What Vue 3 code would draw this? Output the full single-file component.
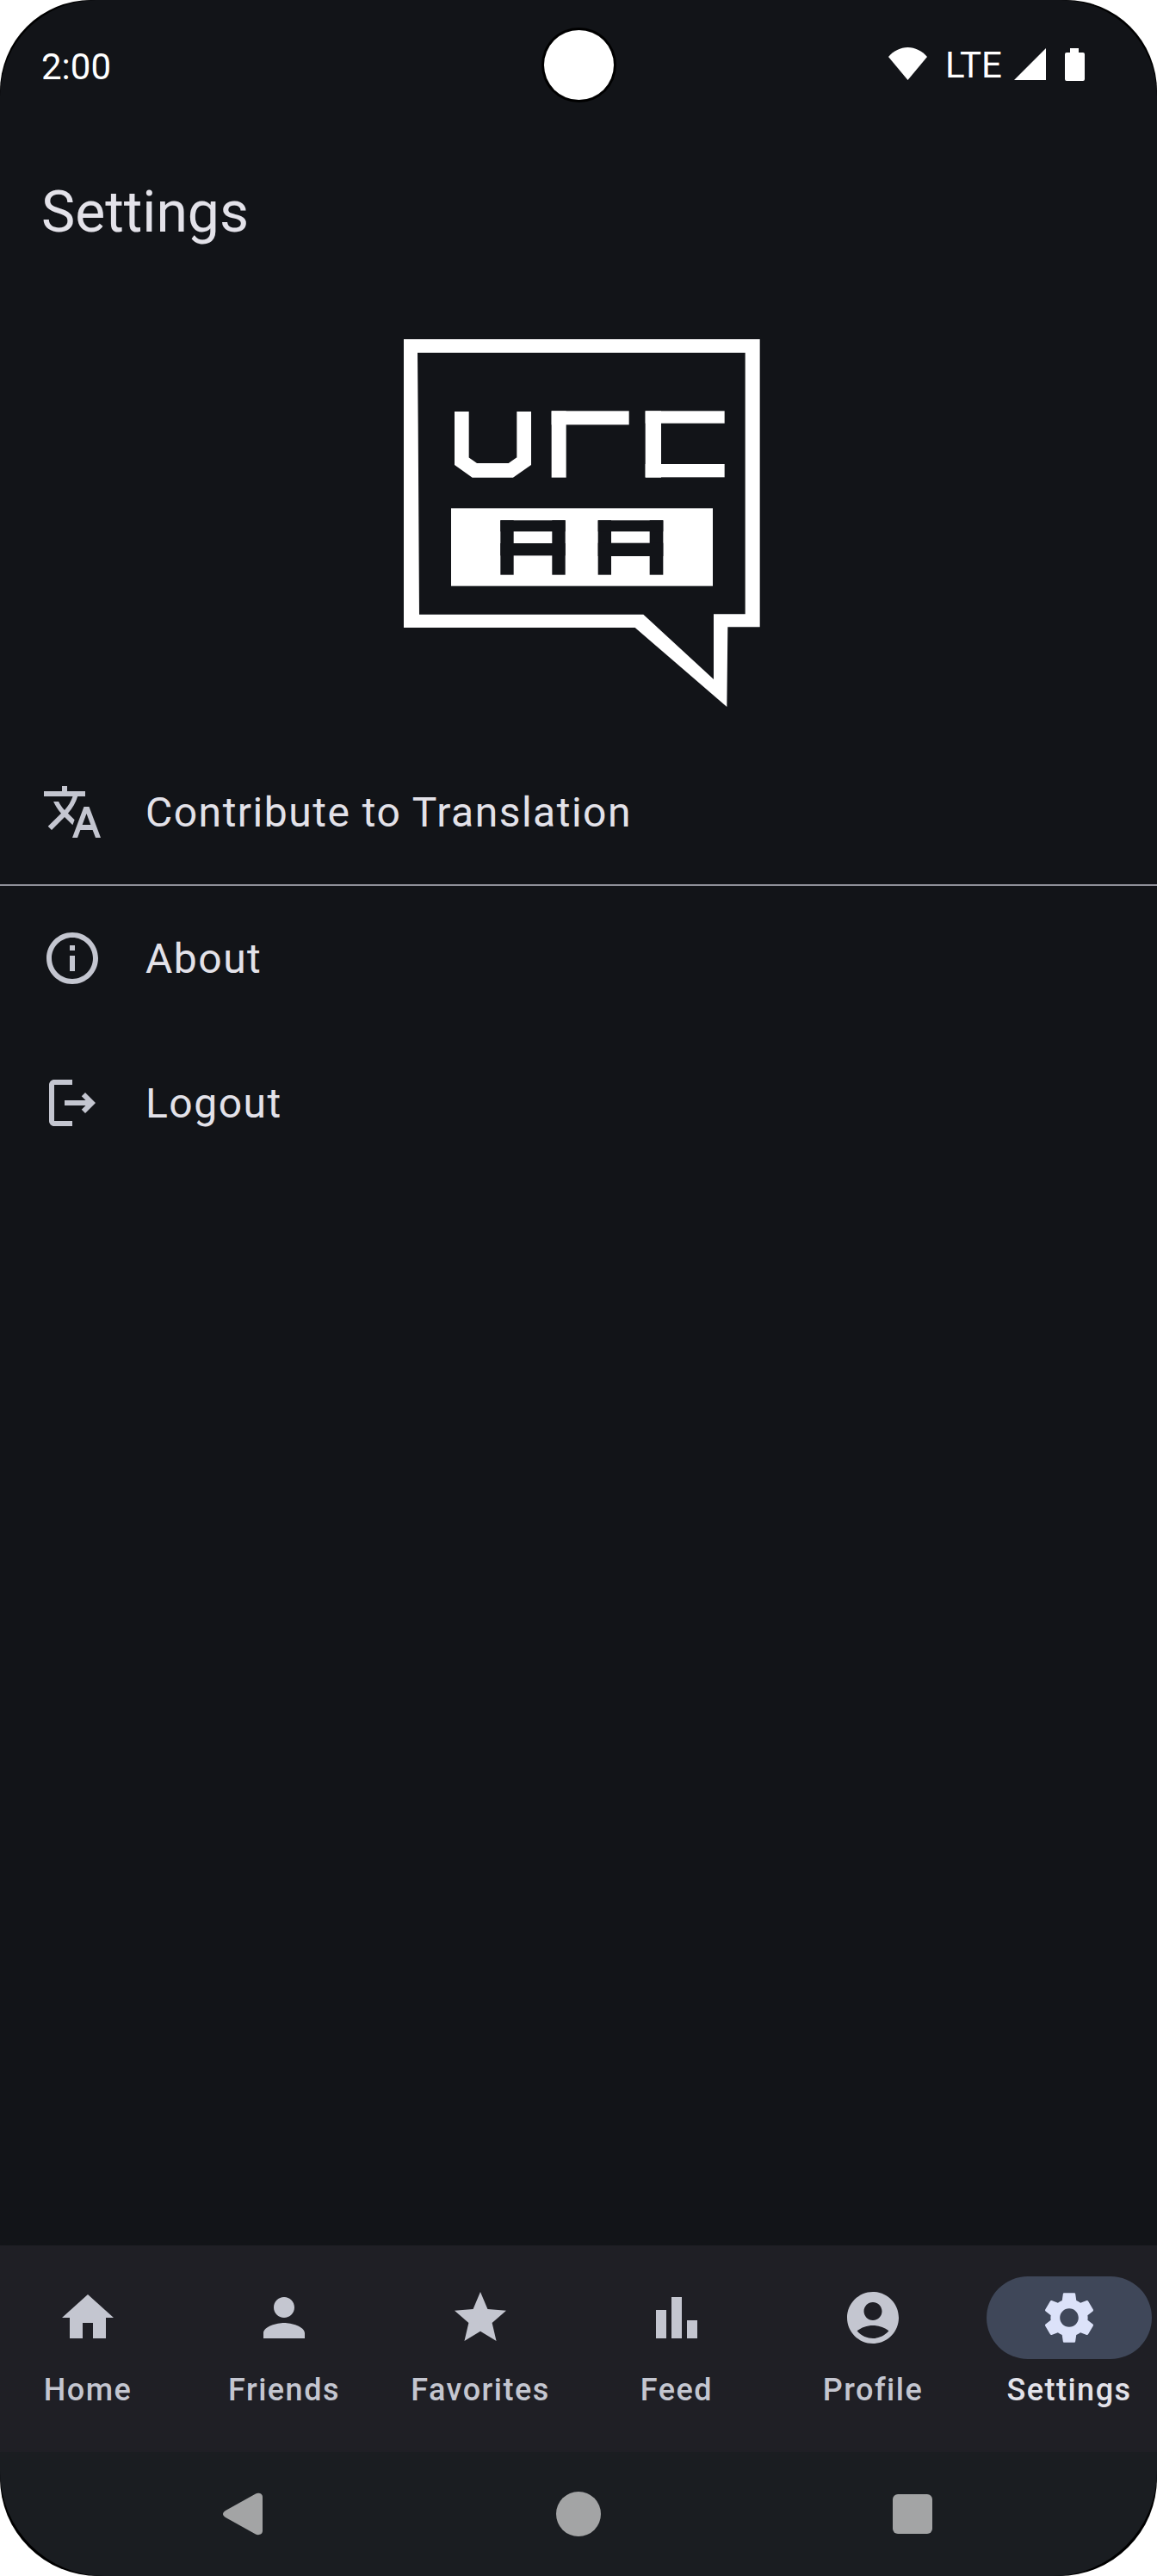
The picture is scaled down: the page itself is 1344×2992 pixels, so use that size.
<script setup>
// Settings screen: status bar, title, logo, option list, bottom navigation, system nav.
const options = [
  {
    label: 'Contribute to Translation',
    divider: true,
    d: 'M12.87 15.07l-2.54-2.51.03-.03c1.74-1.94 2.98-4.17 3.71-6.53H17V4h-7V2H8v2H1v1.99h11.17C11.5 7.92 10.44 9.75 9 11.35 8.07 10.32 7.3 9.19 6.69 8h-2c.73 1.63 1.73 3.17 2.98 4.56l-5.09 5.02L4 19l5-5 3.11 3.11.76-2.04zM18.5 10h-2L12 22h2l1.12-3h4.75L21 22h2l-4.5-12zm-2.62 7l1.62-4.33L19.12 17h-3.24z',
  },
  {
    label: 'About',
    d: 'M11 7h2v2h-2zm0 4h2v6h-2zm1-9C6.48 2 2 6.48 2 12s4.48 10 10 10 10-4.48 10-10S17.52 2 12 2zm0 18c-4.41 0-8-3.59-8-8s3.59-8 8-8 8 3.59 8 8-3.59 8-8 8z',
  },
  {
    label: 'Logout',
    d: 'M5 5h7V3H5c-1.1 0-2 .9-2 2v14c0 1.1.9 2 2 2h7v-2H5V5zM17 8l-1.41 1.41L17.17 11H9v2h8.17l-1.58 1.59L17 16l4-4z',
  },
]

const tabs = [
  { label: 'Home', d: 'M10 20v-6h4v6h5v-8h3L12 3 2 12h3v8z' },
  { label: 'Friends', d: 'M12 12c2.21 0 4-1.79 4-4s-1.79-4-4-4-4 1.79-4 4 1.79 4 4 4zm0 2c-2.67 0-8 1.34-8 4v2h16v-2c0-2.66-5.33-4-8-4z' },
  { label: 'Favorites', d: 'M12 17.27L18.18 21l-1.64-7.03L22 9.24l-7.19-.61L12 2 9.19 8.63 2 9.24l5.46 4.73L5.82 21z' },
  { label: 'Feed', d: 'M4 9h4v11H4zm6-5h4v16h-4zm6 9h4v7h-4z' },
  { label: 'Profile', d: 'M12 2C6.48 2 2 6.48 2 12s4.48 10 10 10 10-4.48 10-10S17.52 2 12 2zm0 4c1.93 0 3.5 1.57 3.5 3.5S13.93 13 12 13s-3.5-1.57-3.5-3.5S10.07 6 12 6zm0 14c-2.03 0-4.43-.82-6.14-2.88C7.55 15.8 9.68 15 12 15s4.45.8 6.14 2.12C16.43 19.18 14.03 20 12 20z' },
  {
    label: 'Settings',
    active: true,
    d: 'M19.14 12.94c.04-.3.06-.61.06-.94 0-.32-.02-.64-.07-.94l2.03-1.58c.18-.14.23-.41.12-.61l-1.92-3.32c-.12-.22-.37-.29-.59-.22l-2.39.96c-.5-.38-1.03-.7-1.62-.94l-.36-2.54c-.04-.24-.24-.41-.48-.41h-3.84c-.24 0-.43.17-.47.41l-.36 2.54c-.59.24-1.13.57-1.62.94l-2.39-.96c-.22-.08-.47 0-.59.22L2.74 8.87c-.12.21-.08.47.12.61l2.03 1.58c-.05.3-.09.63-.09.94s.02.64.07.94l-2.03 1.58c-.18.14-.23.41-.12.61l1.92 3.32c.12.22.37.29.59.22l2.39-.96c.5.38 1.03.7 1.62.94l.36 2.54c.05.24.24.41.48.41h3.84c.24 0 .44-.17.47-.41l.36-2.54c.59-.24 1.13-.56 1.62-.94l2.39.96c.22.08.47 0 .59-.22l1.92-3.32c.12-.22.07-.47-.12-.61l-2.01-1.58zM12 15.6c-1.98 0-3.6-1.62-3.6-3.6s1.62-3.6 3.6-3.6 3.6 1.62 3.6 3.6-1.62 3.6-3.6 3.6z',
  },
]
</script>

<template>
  <div class="device">
    <div class="screen">
      <div class="camera"></div>

      <div class="status">
        <span class="time">2:00</span>
        <div class="status-icons">
          <svg class="wifi" width="45" height="38" viewBox="0 0 45 38"><path d="M22.5 38L0 11C6 4 14 0 22.5 0S39 4 45 11z" /></svg>
          <span class="lte">LTE</span>
          <svg class="signal" width="37" height="37" viewBox="0 0 37 37"><path d="M37 0v37H0z" /></svg>
          <svg class="battery" width="23" height="38" viewBox="0 0 23 38"><path d="M6 0h10v5h5a2 2 0 0 1 2 2v29a2 2 0 0 1-2 2H2a2 2 0 0 1-2-2V7a2 2 0 0 1 2-2h4z" /></svg>
        </div>
      </div>

      <main class="content">
        <h1 class="title">Settings</h1>

        <div class="logo">
          <svg width="464" height="460" viewBox="0 0 1392 1380" role="img" aria-label="VRC AA logo">
            <path class="logo-light" fill-rule="evenodd" d="M87 42H1328V1045H1216L1213 1323 893 1047H87zM135 89L137 335 141 1001H922L1167 1227V1000H1277V89z" />
            <polyline class="logo-stroke" points="289,294 289,467 334,499 460,499 506,467 506,294" />
            <rect class="logo-light" x="602" y="292" width="51" height="232" />
            <rect class="logo-light" x="602" y="292" width="270" height="48" />
            <rect class="logo-light" x="929" y="292" width="55" height="232" />
            <rect class="logo-light" x="929" y="292" width="276" height="43" />
            <rect class="logo-light" x="929" y="477" width="276" height="46" />
            <rect class="logo-light" x="252" y="631" width="912" height="271" />
            <rect class="logo-dark" x="424" y="673" width="46" height="190" />
            <rect class="logo-dark" x="604" y="673" width="46" height="190" />
            <rect class="logo-dark" x="424" y="673" width="226" height="39" />
            <rect class="logo-dark" x="424" y="753" width="226" height="43" />
            <rect class="logo-dark" x="764" y="673" width="46" height="190" />
            <rect class="logo-dark" x="944" y="673" width="47" height="190" />
            <rect class="logo-dark" x="764" y="673" width="227" height="39" />
            <rect class="logo-dark" x="764" y="752" width="227" height="46" />
          </svg>
        </div>

        <ul class="options">
          <li v-for="item in options" :key="item.label" class="option" :class="{ divided: item.divider }">
            <svg class="option-icon" width="72" height="72" viewBox="0 0 24 24"><path :d="item.d" /></svg>
            <span class="option-label">{{ item.label }}</span>
          </li>
        </ul>
      </main>

      <nav class="tabs">
        <div v-for="tab in tabs" :key="tab.label" class="tab" :class="{ active: tab.active }">
          <div class="tab-pill">
            <svg width="72" height="72" viewBox="0 0 24 24"><path :d="tab.d" /></svg>
          </div>
          <span class="tab-label">{{ tab.label }}</span>
        </div>
      </nav>

      <div class="sysnav">
        <svg width="46" height="50" viewBox="0 0 46 50"><path d="M3 21L38 1.500c3-1.500 8-.5 8 4v39c0 4.500-5 5.500-8 4L3 29c-4-2.500-4-5.500 0-8z" /></svg>
        <svg width="52" height="52" viewBox="0 0 52 52"><circle cx="26" cy="26" r="26" /></svg>
        <svg width="46" height="46" viewBox="0 0 46 46"><rect width="46" height="46" rx="6" /></svg>
      </div>
    </div>
  </div>
</template>

<style>
body {
  background: #fff;
}
</style>

<style scoped>
.device {
  width: 1344px;
  height: 2992px;
  background: #000;
  border-radius: 106px 106px 114px 114px;
  overflow: hidden;
}
.screen {
  position: relative;
  width: 100%;
  height: 100%;
  display: flex;
  flex-direction: column;
  background: #121418;
  border-radius: 112px 112px 122px 122px;
  overflow: hidden;
  font-family: Roboto, "Noto Sans", sans-serif;
  color: #e3e2e9;
}

/* punch-hole camera sits over the status bar */
.camera {
  position: absolute;
  top: 35px;
  left: 631.5px;
  width: 81px;
  height: 81px;
  border-radius: 50%;
  background: #fff;
  box-shadow: 0 0 0 3px #000;
}

.status {
  height: 204px;
  flex: none;
  padding: 53px 84px 0 48px;
  box-sizing: border-box;
  display: flex;
  justify-content: space-between;
  align-items: flex-start;
  color: #fff;
}
.time {
  font-size: 42px;
  line-height: 50px;
}
.status-icons {
  display: flex;
  align-items: flex-start;
  padding-top: 2px;
}
.status-icons svg {
  fill: #fff;
  flex: none;
}
.lte {
  font-size: 42px;
  line-height: 38px;
  margin: 2px 13px 0 21px;
  width: 67px;
  white-space: nowrap;
}
.signal {
  margin-top: 1px;
}
.battery {
  margin-left: 22px;
  margin-top: 1px;
}

.content {
  flex: 1;
  min-height: 0;
}
.title {
  margin: 0;
  padding-left: 48px;
  font-size: 66px;
  font-weight: 400;
  line-height: 86px;
}
.logo {
  display: flex;
  justify-content: center;
  margin-top: 90px;
}
.logo-light {
  fill: #fff;
}
.logo-dark {
  fill: #121418;
}
.logo-stroke {
  fill: none;
  stroke: #fff;
  stroke-width: 50;
}

.options {
  list-style: none;
  margin: 19px 0 0;
  padding: 0;
}
.option {
  height: 168px;
  display: flex;
  align-items: center;
  padding-left: 48px;
}
.option.divided {
  border-bottom: 2px solid #8f9099;
}
.option-icon {
  fill: #c4c6d0;
  flex: none;
}
.option-label {
  margin-left: 49px;
  font-size: 48px;
  letter-spacing: 1.5px;
}

.tabs {
  flex: none;
  height: 240px;
  display: grid;
  grid-template-columns: repeat(6, 204px);
  gap: 24px;
  background: #1f1f25;
  color: #c4c6d0;
}
.tab {
  display: flex;
  flex-direction: column;
  align-items: center;
  padding-top: 36px;
}
.tab-pill {
  width: 192px;
  height: 96px;
  border-radius: 48px;
  display: flex;
  align-items: center;
  justify-content: center;
}
.tab-pill svg {
  fill: #c4c6d0;
}
.tab-label {
  margin-top: 12px;
  font-size: 36px;
  font-weight: 500;
  line-height: 48px;
  letter-spacing: 1.5px;
  white-space: nowrap;
}
.tab.active .tab-pill {
  background: #3f4759;
}
.tab.active .tab-pill svg {
  fill: #dce2f9;
}
.tab.active .tab-label {
  color: #e3e2e9;
}

.sysnav {
  flex: none;
  height: 144px;
  background: #1a1d21;
  display: grid;
  grid-template-columns: 259px 46px 341px 52px 339px 46px;
  align-items: center;
}
.sysnav svg {
  fill: #a3a4a5;
  grid-row: 1;
}
.sysnav svg:nth-child(1) { grid-column: 2; }
.sysnav svg:nth-child(2) { grid-column: 4; }
.sysnav svg:nth-child(3) { grid-column: 6; }
</style>
